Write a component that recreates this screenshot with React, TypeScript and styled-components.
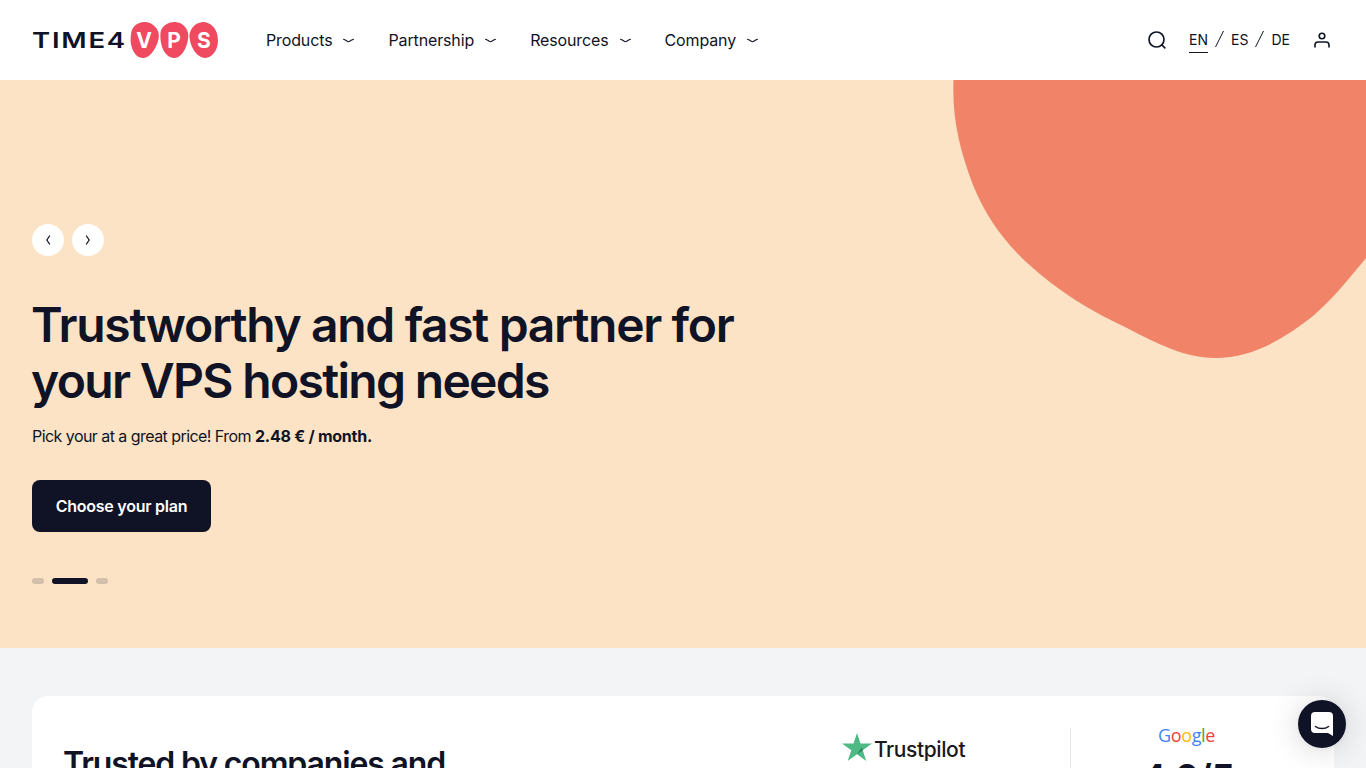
import styled, { createGlobalStyle } from "styled-components";

const DARK = "#0f1325";

const GlobalStyle = createGlobalStyle`
  html, body {
    margin: 0;
    height: 768px;
    overflow: hidden;
    background: #f3f4f6;
    font-family: Inter, "Liberation Sans", sans-serif;
    color: ${DARK};
  }
  * { box-sizing: border-box; }
`;

const navItems = ["Products", "Partnership", "Resources", "Company"];

function Chevron() {
  return (
    <svg width="11" height="5" viewBox="0 0 11 5" fill="none">
      <path d="M.6 1.200C1.800 1.800 2.800 2.200 3.500 2.700C4.300 3.300 4.900 3.700 5.500 3.700S6.700 3.300 7.500 2.700C8.200 2.200 9.200 1.800 10.400 1.200" stroke={DARK} strokeWidth="1.100" strokeLinecap="round" />
    </svg>
  );
}

function Star() {
  return (
    <svg width="30" height="28" viewBox="0 0 30 28">
      <path d="M15 0l3.500 10.600H30l-9.300 6.600 3.600 10.800L15 21.300 5.700 28l3.600-10.800L0 10.600h11.500z" fill="#4fb985" />
      <path d="M20.700 17.200l-.8-2.500-4.900 6.600z" fill="#2b7a54" />
    </svg>
  );
}

export default function App() {
  return (
    <>
      <GlobalStyle />
      <Header>
        <Logo>
          <LogoWord>TIME4</LogoWord>
          <Blobs>
            <Blob $shape="48% 52% 46% 54% / 36% 38% 62% 64%" $tilt={12}>V</Blob>
            <Blob $shape="50% 50% 48% 52% / 34% 38% 62% 66%" $tilt={4}>P</Blob>
            <Blob $shape="50% 50% 50% 50% / 40% 46% 54% 60%" $tilt={-8}>S</Blob>
          </Blobs>
        </Logo>
        <Nav>
          {navItems.map((item) => (
            <NavItem key={item}>
              {item}
              <Chevron />
            </NavItem>
          ))}
        </Nav>
        <Tools>
          <svg width="20" height="20" viewBox="0 0 20 20" fill="none">
            <circle cx="9.500" cy="9.500" r="7.500" stroke={DARK} strokeWidth="1.700" />
            <path d="M15 15l2.800 2.800" stroke={DARK} strokeWidth="1.700" strokeLinecap="round" />
          </svg>
          <Languages>
            <Lang $active>EN</Lang>
            <Slash viewBox="0 0 10 18" fill="none">
              <path d="M1 17L9 1" stroke={DARK} strokeWidth="1" />
            </Slash>
            <Lang>ES</Lang>
            <Slash viewBox="0 0 10 18" fill="none">
              <path d="M1 17L9 1" stroke={DARK} strokeWidth="1" />
            </Slash>
            <Lang>DE</Lang>
          </Languages>
          <svg width="16" height="16" viewBox="0 0 16 16" fill="none">
            <circle cx="8" cy="4" r="2.800" stroke={DARK} strokeWidth="1.600" />
            <path d="M1 15v-2c0-2 1.200-3 3-3h8c1.800 0 3 1 3 3v2" stroke={DARK} strokeWidth="1.600" strokeLinecap="round" />
          </svg>
        </Tools>
      </Header>

      <Hero>
        <HeroBlob viewBox="0 0 413 278" aria-hidden="true">
          <path d="M0.500 0C-1 40 7 70 20 105C32 135 50 160 72 181C105 212 140 232 174 248C205 264 232 278 262 278C300 278 332 258 360 236C380 219 398 196 413 178V0Z" fill="#f08368" />
        </HeroBlob>
        <Arrows>
          <ArrowButton aria-label="Previous">
            <svg width="6" height="10" viewBox="0 0 6 10" fill="none">
              <path d="M4.500 1C3.500 2.500 2.500 4 1.800 5C2.500 6 3.500 7.500 4.500 9" stroke={DARK} strokeWidth="1.300" strokeLinecap="round" />
            </svg>
          </ArrowButton>
          <ArrowButton aria-label="Next">
            <svg width="6" height="10" viewBox="0 0 6 10" fill="none">
              <path d="M1.500 1C2.500 2.500 3.500 4 4.200 5C3.500 6 2.500 7.500 1.500 9" stroke={DARK} strokeWidth="1.300" strokeLinecap="round" />
            </svg>
          </ArrowButton>
        </Arrows>
        <Title>
          <TitleLine $spacing={-1.35}>Trustworthy and fast partner for</TitleLine>
          <TitleLine $spacing={-1.68}>your VPS hosting needs</TitleLine>
        </Title>
        <Lead>
          Pick your at a great price! From <strong>2.48 € / month.</strong>
        </Lead>
        <PlanButton>Choose your plan</PlanButton>
        <Dots>
          <Dot />
          <Dot $active />
          <Dot />
        </Dots>
      </Hero>

      <Section>
        <TrustCard>
          <TrustTitle>Trusted by companies and</TrustTitle>
          <Trustpilot>
            <Star />
            <TrustpilotName>Trustpilot</TrustpilotName>
          </Trustpilot>
          <GoogleColumn>
            <GoogleWord>
              <GoogleLetter $color="#4285f4">G</GoogleLetter>
              <GoogleLetter $color="#ea4335">o</GoogleLetter>
              <GoogleLetter $color="#fbbc05">o</GoogleLetter>
              <GoogleLetter $color="#4285f4">g</GoogleLetter>
              <GoogleLetter $color="#34a853">l</GoogleLetter>
              <GoogleLetter $color="#ea4335">e</GoogleLetter>
            </GoogleWord>
            <Score>4.6/5</Score>
          </GoogleColumn>
        </TrustCard>
      </Section>

      <ChatButton aria-label="Chat">
        <svg width="22" height="24" viewBox="0 0 22 24">
          <path d="M4 0h14a4 4 0 0 1 4 4v20l-5-3H4a4 4 0 0 1-4-4V4a4 4 0 0 1 4-4z" fill="#fff" />
          <path d="M4.500 14.500C8 17.300 14 17.300 17.500 14.500" fill="none" stroke={DARK} strokeWidth="1.500" strokeLinecap="round" />
        </svg>
      </ChatButton>
    </>
  );
}

const Header = styled.header`
  height: 80px;
  background: #fff;
  display: flex;
  align-items: center;
  padding: 0 36px 0 32px;
`;

const Logo = styled.div`
  display: flex;
  align-items: center;
  width: 234px;
`;

const LogoWord = styled.span`
  font-size: 22px;
  font-weight: 600;
  letter-spacing: 1.4px;
  line-height: 1;
  width: 98px;
  white-space: nowrap;
  transform: scaleX(1.25);
  transform-origin: left center;
`;

const Blobs = styled.div`
  display: flex;
  gap: 2px;
`;

const Blob = styled.span<{ $shape: string; $tilt: number }>`
  position: relative;
  isolation: isolate;
  width: 28px;
  height: 36px;
  color: #fff;
  display: flex;
  align-items: center;
  justify-content: center;
  font-size: 21px;
  font-weight: 700;

  &::before {
    content: "";
    position: absolute;
    inset: 0;
    z-index: -1;
    background: #ef4a60;
    border-radius: ${(p) => p.$shape};
    transform: rotate(${(p) => p.$tilt}deg);
  }
`;

const Nav = styled.nav`
  display: flex;
  gap: 34px;
`;

const NavItem = styled.a`
  display: flex;
  align-items: center;
  gap: 11px;
  font-size: 16px;
  line-height: 24px;
  letter-spacing: -0.13px;
  color: ${DARK};
`;

const Tools = styled.div`
  margin-left: auto;
  display: flex;
  align-items: center;
  gap: 24px;
`;

const Languages = styled.div`
  display: flex;
  align-items: center;
  gap: 6px;
  margin-left: -2px;
`;

const Lang = styled.span<{ $active?: boolean }>`
  font-size: 14px;
  line-height: 20px;
  padding: 2px 0;
  border-bottom: 1px solid ${(p) => (p.$active ? DARK : "transparent")};
`;

const Slash = styled.svg`
  width: 11px;
  height: 18px;
  margin-bottom: 3px;
`;

const Hero = styled.section`
  position: relative;
  height: 568px;
  background: #fce3c6;
  padding: 144px 32px 0;
  overflow: hidden;
`;

const HeroBlob = styled.svg`
  position: absolute;
  top: 0;
  right: 0;
  width: 413px;
  height: 278px;
`;

const Arrows = styled.div`
  display: flex;
  gap: 8px;
`;

const ArrowButton = styled.button`
  width: 32px;
  height: 32px;
  border: none;
  border-radius: 50%;
  background: #fff;
  padding: 0;
  display: flex;
  align-items: center;
  justify-content: center;
`;

const Title = styled.h1`
  position: relative;
  margin: 41px 0 0 -1px;
  font-size: 48px;
  line-height: 56px;
  font-weight: 600;
`;

const TitleLine = styled.span<{ $spacing: number }>`
  display: block;
  letter-spacing: ${(p) => p.$spacing}px;
`;

const Lead = styled.p`
  margin: 15px 0 0;
  font-size: 16px;
  line-height: 24px;
  letter-spacing: -0.55px;

  strong {
    font-weight: 700;
    letter-spacing: -0.25px;
  }
`;

const PlanButton = styled.button`
  display: block;
  margin-top: 32px;
  width: 179px;
  height: 52px;
  border: none;
  border-radius: 8px;
  background: ${DARK};
  color: #fff;
  font-family: inherit;
  font-size: 16px;
  font-weight: 600;
  letter-spacing: -0.25px;
`;

const Dots = styled.div`
  display: flex;
  gap: 8px;
  margin-top: 46px;
`;

const Dot = styled.span<{ $active?: boolean }>`
  width: ${(p) => (p.$active ? 36 : 12)}px;
  height: 6px;
  border-radius: 3px;
  background: ${(p) => (p.$active ? DARK : "#d3bfaa")};
`;

const Section = styled.section`
  padding: 48px 32px 0;
`;

const TrustCard = styled.div`
  height: 240px;
  background: #fff;
  border-radius: 16px;
  padding: 32px;
  display: flex;
  align-items: flex-start;
`;

const TrustTitle = styled.h2`
  margin: 16px 0 0 -1px;
  font-size: 32px;
  line-height: 40px;
  font-weight: 600;
  width: 779px;
  flex: none;
  letter-spacing: -1.14px;
`;

const Trustpilot = styled.div`
  display: flex;
  align-items: center;
  gap: 2px;
  margin-top: 4px;
  width: 228px;
  flex: none;
`;

const TrustpilotName = styled.span`
  font-size: 21px;
  font-weight: 500;
  color: #191919;
  letter-spacing: -0.4px;
  margin-top: 5px;
`;

const GoogleColumn = styled.div`
  border-left: 1px solid #e5e7eb;
  width: 234px;
  flex: none;
  height: 120px;
  display: flex;
  flex-direction: column;
  align-items: center;
`;

const GoogleWord = styled.div`
  font-family: "Open Sans", sans-serif;
  font-size: 18px;
  line-height: 18px;
  letter-spacing: -0.4px;
  margin: -2px 2px 0 0;
`;

const GoogleLetter = styled.span<{ $color: string }>`
  color: ${(p) => p.$color};
`;

const Score = styled.div`
  margin-top: 10px;
  font-size: 38px;
  line-height: 48px;
  font-weight: 600;
  letter-spacing: -1px;
`;

const ChatButton = styled.button`
  position: fixed;
  right: 20px;
  bottom: 20px;
  width: 48px;
  height: 48px;
  border: none;
  border-radius: 50%;
  padding: 0;
  background: ${DARK};
  display: flex;
  align-items: center;
  justify-content: center;
  box-shadow: 0 1px 6px rgba(0, 0, 0, 0.06), 0 2px 32px rgba(0, 0, 0, 0.16);
`;
